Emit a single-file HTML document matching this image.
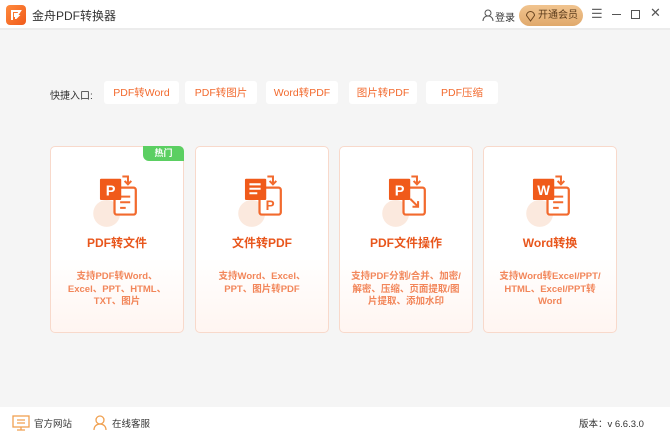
<!DOCTYPE html>
<html><head><meta charset="utf-8"><style>
*{margin:0;padding:0;box-sizing:border-box}
body{width:670px;height:436px;overflow:hidden;background:#f5f5f5;font-family:"Liberation Sans","Noto Sans CJK SC",sans-serif;position:relative}
.hdr{position:absolute;left:0;top:0;width:670px;height:30px;background:#fff;border-bottom:2px solid #ececec}
.logo{position:absolute;left:6px;top:5px;width:20px;height:20px;border-radius:4px;background:linear-gradient(135deg,#ff8a3d,#f05a1a)}
.title{position:absolute;left:32px;top:7px;font-size:12px;color:#333}
.abs{position:absolute}
.q{position:absolute;top:81px;height:23px;background:#fff;border-radius:3px;color:#f26a2e;font-size:10.5px;text-align:center;line-height:24px}
.card{position:absolute;top:146px;width:134px;height:187px;border:1px solid #f8d9cb;border-radius:5px;background:linear-gradient(#fff 60%,#fff5f1);text-align:center}
.card svg{position:absolute;left:42px;top:25px}
.ct{position:absolute;left:0;right:0;top:87px;font-size:12px;font-weight:bold;color:#e8561c}
.cd{position:absolute;left:6px;right:6px;top:124px;font-size:9.5px;line-height:12.5px;font-weight:bold;color:#f2865a}
.hot{position:absolute;right:-1px;top:-1px;width:41px;height:15px;background:#5bcf62;border-radius:0 5px 0 6px;color:#fff;font-size:9px;line-height:15px;font-weight:bold}
.ftr{position:absolute;left:0;top:407px;width:670px;height:29px;background:#fff;font-size:9.5px;color:#333}
</style></head><body>
<div class="hdr">
<div class="logo"><svg width="20" height="20"><path d="M6 15V6h8l-2 3H9v2h3l-2 2H9" fill="none" stroke="#fff" stroke-width="2"/></svg></div>
<div class="title">金舟PDF转换器</div>
<svg class="abs" style="left:482px;top:9px" width="12" height="12"><circle cx="6" cy="4" r="3" fill="none" stroke="#555"/><path d="M1 12c0-3 2-5 5-5s5 2 5 5" fill="none" stroke="#555"/></svg>
<div class="abs" style="left:495px;top:9px;font-size:10px;color:#333">登录</div>
<div class="abs" style="left:519px;top:5px;width:64px;height:21px;border-radius:11px;background:linear-gradient(#f1c48f,#e0a96c);font-size:10px;color:#5a3a1a;line-height:21px;padding-left:19px">开通会员</div>
<svg class="abs" style="left:525px;top:10px" width="11" height="12"><path d="M5.5 11L1.5 5.5a4 4 0 1 1 8 0z" fill="none" stroke="#6a4520"/></svg>
<div class="abs" style="left:591px;top:6px;font-size:13px;color:#666">☰</div>
<div class="abs" style="left:612px;top:14px;width:9px;height:1px;background:#555"></div>
<div class="abs" style="left:631px;top:10px;width:9px;height:9px;border:1px solid #555"></div>
<div class="abs" style="left:650px;top:5px;font-size:13px;color:#555">✕</div>
</div>
<div class="abs" style="left:50px;top:87px;font-size:10px;color:#333">快捷入口:</div>
<div class="q" style="left:104px;width:75px">PDF转Word</div>
<div class="q" style="left:185px;width:72px">PDF转图片</div>
<div class="q" style="left:266px;width:72px">Word转PDF</div>
<div class="q" style="left:349px;width:68px">图片转PDF</div>
<div class="q" style="left:426px;width:72px">PDF压缩</div>

<div class="card" style="left:50px"><div class="hot">热门</div>
<svg width="52" height="56" viewBox="0 0 46 50"><circle cx="12" cy="37" r="12" fill="#fbe9de"/><rect x="19" y="14" width="19" height="24" rx="2" fill="#fff" stroke="#f26a2e" stroke-width="2"/><path d="M26 4h5v6M28 8l3 3 3-3" fill="none" stroke="#f26a2e" stroke-width="1.8"/><path d="M24 22h9M24 27h9M24 32h5" stroke="#f26a2e" stroke-width="1.8"/><rect x="6" y="6" width="19" height="19" rx="1" fill="#f05a1a"/><text x="15.5" y="21" font-size="13" font-weight="bold" fill="#fff" text-anchor="middle" font-family="Liberation Sans">P</text></svg>
<div class="ct">PDF转文件</div><div class="cd">支持PDF转Word、<br>Excel、PPT、HTML、<br>TXT、图片</div></div>

<div class="card" style="left:195px">
<svg width="52" height="56" viewBox="0 0 46 50"><circle cx="12" cy="37" r="12" fill="#fbe9de"/><rect x="19" y="14" width="19" height="24" rx="2" fill="#fff" stroke="#f26a2e" stroke-width="2"/><path d="M26 4h5v6M28 8l3 3 3-3" fill="none" stroke="#f26a2e" stroke-width="1.8"/><text x="28.5" y="34" font-size="12" font-weight="bold" fill="#f26a2e" text-anchor="middle" font-family="Liberation Sans">P</text><rect x="6" y="6" width="19" height="19" rx="1" fill="#f05a1a"/><path d="M10 11h10M10 15h10M10 19h7" stroke="#fff" stroke-width="1.8"/></svg>
<div class="ct">文件转PDF</div><div class="cd">支持Word、Excel、<br>PPT、图片转PDF</div></div>

<div class="card" style="left:339px">
<svg width="52" height="56" viewBox="0 0 46 50"><circle cx="12" cy="37" r="12" fill="#fbe9de"/><rect x="19" y="14" width="19" height="24" rx="2" fill="#fff" stroke="#f26a2e" stroke-width="2"/><path d="M26 4h5v6M28 8l3 3 3-3" fill="none" stroke="#f26a2e" stroke-width="1.8"/><path d="M25 24l7 7M27 31h5v-5" fill="none" stroke="#f26a2e" stroke-width="1.8"/><rect x="6" y="6" width="19" height="19" rx="1" fill="#f05a1a"/><text x="15.5" y="21" font-size="13" font-weight="bold" fill="#fff" text-anchor="middle" font-family="Liberation Sans">P</text></svg>
<div class="ct">PDF文件操作</div><div class="cd">支持PDF分割/合并、加密/<br>解密、压缩、页面提取/图<br>片提取、添加水印</div></div>

<div class="card" style="left:483px">
<svg width="52" height="56" viewBox="0 0 46 50"><circle cx="12" cy="37" r="12" fill="#fbe9de"/><rect x="19" y="14" width="19" height="24" rx="2" fill="#fff" stroke="#f26a2e" stroke-width="2"/><path d="M26 4h5v6M28 8l3 3 3-3" fill="none" stroke="#f26a2e" stroke-width="1.8"/><path d="M24 22h9M24 27h9M24 32h5" stroke="#f26a2e" stroke-width="1.8"/><rect x="6" y="6" width="19" height="19" rx="1" fill="#f05a1a"/><text x="15.5" y="20.5" font-size="12" font-weight="bold" fill="#fff" text-anchor="middle" font-family="Liberation Sans">W</text></svg>
<div class="ct">Word转换</div><div class="cd">支持Word转Excel/PPT/<br>HTML、Excel/PPT转<br>Word</div></div>

<div class="ftr">
<svg class="abs" style="left:12px;top:8px" width="18" height="16"><rect x="1" y="1" width="16" height="11" fill="none" stroke="#f0a050" stroke-width="1.3"/><path d="M5 5h8M5 8h8M9 12v3M5 15h8" stroke="#f0a050" stroke-width="1.3"/></svg>
<div class="abs" style="left:34px;top:9px">官方网站</div>
<svg class="abs" style="left:93px;top:8px" width="14" height="16"><circle cx="7" cy="5" r="4" fill="none" stroke="#f0a050" stroke-width="1.3"/><path d="M1 15c0-4 3-6 6-6s6 2 6 6" fill="none" stroke="#f0a050" stroke-width="1.3"/></svg>
<div class="abs" style="left:112px;top:9px">在线客服</div>
<div class="abs" style="left:579px;top:9px">版本：v 6.6.3.0</div>
</div>
</body></html>
